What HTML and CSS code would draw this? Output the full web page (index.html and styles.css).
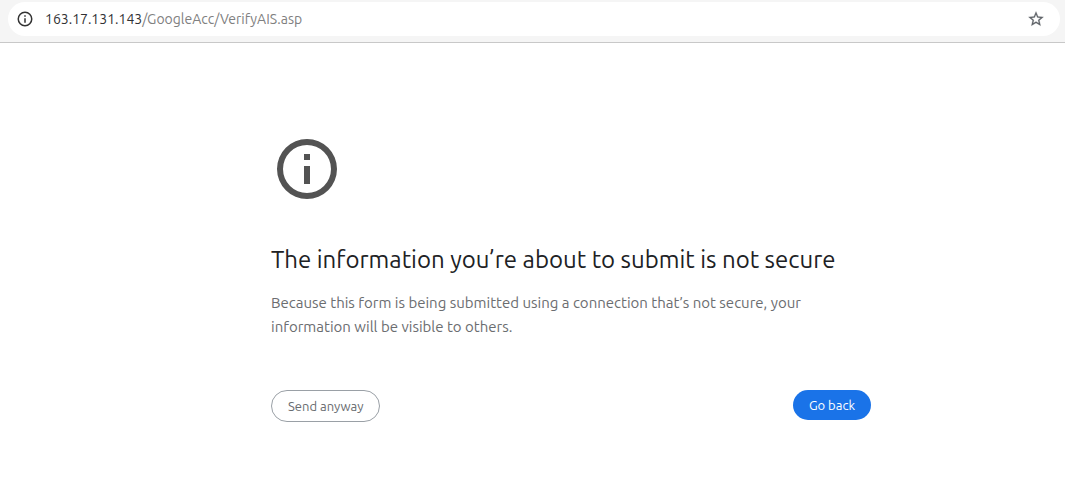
FILE: index.html
```html
<!DOCTYPE html>
<html lang="en">
<head>
<meta charset="utf-8">
<title>Form is not secure</title>
<link rel="stylesheet" href="styles.css">
</head>
<body>
<header class="toolbar">
  <div class="omnibox">
    <button class="icon-button" type="button" aria-label="View site information">
      <svg class="small-icon" viewBox="0 0 24 24"><path fill="currentColor" d="M11 7h2v2h-2zm0 4h2v6h-2zm1-9a10 10 0 1 0 0 20 10 10 0 0 0 0-20zm0 18a8 8 0 1 1 0-16 8 8 0 0 1 0 16z"/></svg>
    </button>
    <a class="address" href="#"><span class="host">163.17.131.143</span>/GoogleAcc/VerifyAIS.asp</a>
    <button class="icon-button" type="button" aria-label="Bookmark this page">
      <svg class="star-icon" viewBox="0 0 24 24"><path fill="currentColor" stroke="currentColor" stroke-width=".3" d="M22 9.24l-7.19-.62L12 2 9.19 8.63 2 9.24l5.46 4.73L5.82 21 12 17.27 18.18 21l-1.63-7.03L22 9.24zM12 15.4l-3.76 2.27 1-4.28-3.32-2.88 4.38-.38L12 6.1l1.71 4.04 4.38.38-3.32 2.88 1 4.28L12 15.4z"/></svg>
    </button>
  </div>
</header>
<main class="page">
  <div class="notice">
    <svg class="notice-icon" viewBox="0 0 24 24" aria-hidden="true"><path fill="currentColor" d="M11 7h2v2h-2zm0 4h2v6h-2zm1-9a10 10 0 1 0 0 20 10 10 0 0 0 0-20zm0 18a8 8 0 1 1 0-16 8 8 0 0 1 0 16z"/></svg>
    <h1 class="title">The information you’re about to submit is not secure</h1>
    <p class="message">Because this form is being submitted using a connection that’s not secure, your information will be visible to others.</p>
    <div class="actions">
      <button class="button secondary" type="button">Send anyway</button>
      <button class="button primary" type="button">Go back</button>
    </div>
  </div>
</main>
</body>
</html>
```
FILE: styles.css
```css
* {
  box-sizing: border-box;
}

body {
  margin: 0;
  background: #fff;
  color: #5f6368;
  font-family: Ubuntu, "Noto Sans", sans-serif;
}

.toolbar {
  padding: 2px 5px 6px 8px;
  background: #f5f5f5;
  border-bottom: 1px solid #c8c8c8;
}

.omnibox {
  display: flex;
  align-items: center;
  height: 34px;
  padding: 0 15px 0 8px;
  background: #fff;
  border-radius: 17px;
}

.icon-button {
  display: flex;
  padding: 0;
  border: 0;
  background: none;
  color: #5f6368;
}

.small-icon {
  width: 18px;
  height: 18px;
  color: #333;
}

.star-icon {
  width: 18px;
  height: 18px;
}

.address {
  flex: 1;
  margin-left: 11px;
  color: #808080;
  font-size: 14px;
  line-height: 20px;
  text-decoration: none;
}

.host {
  color: #303134;
}

.page {
  padding: 90px 0 24px 77px;
}

.notice {
  max-width: 600px;
  margin: 0 auto;
}

.notice-icon {
  display: block;
  width: 72px;
  height: 72px;
  color: #535353;
}

.title {
  margin: 40px 0 16px;
  color: #202124;
  font-size: 24px;
  font-weight: 400;
  line-height: 30px;
}

.message {
  margin: 0;
  color: #6b6d70;
  font-size: 15px;
  line-height: 24px;
}

.actions {
  display: flex;
  justify-content: space-between;
  align-items: flex-start;
  margin-top: 51px;
}

.button {
  height: 32px;
  padding: 0 16px;
  border: 1px solid #9aa0a6;
  border-radius: 16px;
  background: #fff;
  color: #696c70;
  font: 13px/20px Ubuntu, "Noto Sans", sans-serif;
}

.primary {
  height: 30px;
  border: 0;
  background: #1a73e8;
  color: #fff;
}
```
